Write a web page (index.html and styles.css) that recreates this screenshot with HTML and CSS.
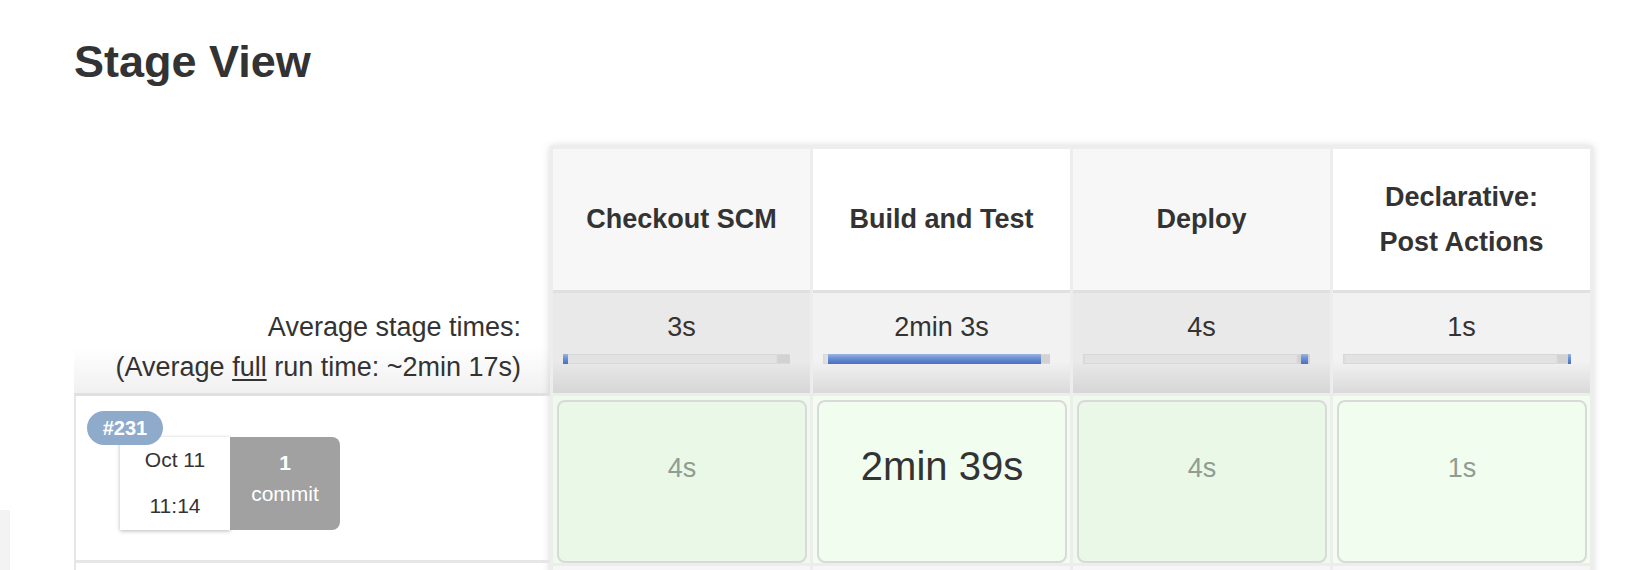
FILE: index.html
```html
<!DOCTYPE html>
<html lang="en">
<head>
<meta charset="utf-8">
<title>Stage View</title>
<link rel="stylesheet" href="styles.css">
</head>
<body>
<div class="page">
  <h1 class="title">Stage View</h1>
  <div class="stage-view">
    <div class="labels">
      <div class="labels-head"></div>
      <div class="labels-avg">
        <div>Average stage times:</div>
        <div>(Average <u>full</u> run time: ~2min 17s)</div>
      </div>
      <div class="build-row">
        <span class="badge">#231</span>
        <div class="build-info">
          <div class="date"><div>Oct 11</div><div>11:14</div></div>
          <div class="commits"><div class="num">1</div><div>commit</div></div>
        </div>
      </div>
      <div class="build-row-next"></div>
    </div>
    <div class="stages">
      <div class="stage-head">Checkout SCM</div>
      <div class="stage-head alt">Build and Test</div>
      <div class="stage-head">Deploy</div>
      <div class="stage-head alt">Declarative:<br>Post Actions</div>

      <div class="stage-avg">3s<div class="bar"><div class="fill" style="margin-left:0px;width:5px"></div></div></div>
      <div class="stage-avg alt">2min 3s<div class="bar"><div class="fill" style="margin-left:5px;width:213px"></div></div></div>
      <div class="stage-avg">4s<div class="bar"><div class="fill" style="margin-left:218px;width:7px"></div></div></div>
      <div class="stage-avg alt">1s<div class="bar"><div class="fill" style="margin-left:225px;width:3px"></div></div></div>

      <div class="stage-cell"><div class="box">4s</div></div>
      <div class="stage-cell alt"><div class="box big">2min 39s</div></div>
      <div class="stage-cell"><div class="box">4s</div></div>
      <div class="stage-cell alt"><div class="box">1s</div></div>

      <div class="stage-next"></div>
      <div class="stage-next"></div>
      <div class="stage-next"></div>
      <div class="stage-next"></div>
    </div>
  </div>
</div>
<div class="side-stub"></div>
</body>
</html>
```
FILE: styles.css
```css
html, body {
  margin: 0;
  height: 570px;
  overflow: hidden;
  background: #fff;
}
body {
  font-family: "Liberation Sans", Arial, Helvetica, sans-serif;
  color: #333;
  position: relative;
}
.page {
  padding-left: 74px;
}
.title {
  margin: 36px 0 0;
  font-size: 45px;
  line-height: 52px;
  font-weight: bold;
  color: #333;
}
.stage-view {
  display: flex;
  align-items: flex-start;
  margin-top: 58px;
}
.labels {
  width: 476px;
  flex: none;
}
.labels-head {
  height: 145px;
}
.labels-avg {
  height: 102px;
  box-sizing: border-box;
  padding: 16px 29px 0 0;
  text-align: right;
  font-size: 27px;
  line-height: 40px;
  background: linear-gradient(to bottom, #fff 55%, #f0f0f0);
}
.labels-avg u {
  text-underline-offset: 3px;
}
.build-row {
  position: relative;
  box-sizing: border-box;
  height: 170px;
  border-top: 3px solid #e0e0e0;
  border-left: 2px solid #e6e6e6;
  border-bottom: 3px solid #e6e6e6;
  padding: 41px 0 0 44px;
}
.build-row-next {
  height: 40px;
  border-left: 2px solid #e6e6e6;
}
.badge {
  position: absolute;
  left: 11px;
  top: 15px;
  width: 76px;
  height: 34px;
  border-radius: 17px;
  background: #8fabcc;
  color: #fff;
  font-size: 20px;
  font-weight: bold;
  line-height: 34px;
  text-align: center;
}
.build-info {
  display: flex;
}
.date {
  width: 110px;
  height: 93px;
  box-sizing: border-box;
  padding-top: 0;
  background: #fff;
  box-shadow: 0 1px 4px rgba(0, 0, 0, 0.28);
  font-size: 21px;
  line-height: 45.5px;
  text-align: center;
}
.commits {
  width: 110px;
  height: 93px;
  box-sizing: border-box;
  padding-top: 10px;
  background: #a1a1a1;
  color: #fff;
  border-radius: 0 8px 8px 0;
  font-size: 21px;
  line-height: 31px;
  text-align: center;
}
.commits .num {
  font-weight: bold;
}
.stages {
  flex: none;
  display: grid;
  grid-template-columns: repeat(4, 257px);
  column-gap: 3px;
  padding: 3px;
  background: #ededed;
  box-shadow: 0 0 8px rgba(0, 0, 0, 0.16);
}
.stage-head {
  height: 141px;
  display: flex;
  align-items: center;
  justify-content: center;
  text-align: center;
  font-size: 27px;
  font-weight: bold;
  line-height: 45px;
  background: #f7f7f7;
}
.stage-head.alt {
  background: #fff;
}
.stage-avg {
  box-sizing: border-box;
  height: 103px;
  border-top: 3px solid #e0e0e0;
  padding-top: 14px;
  text-align: center;
  font-size: 27px;
  line-height: 40px;
  background: linear-gradient(to bottom, #e9e9e9 0, #e9e9e9 68%, #d6d6d6 100%);
}
.stage-avg.alt {
  background: linear-gradient(to bottom, #f2f2f2 0, #f2f2f2 68%, #dadada 100%);
}
.bar {
  display: flex;
  margin: 7px 0 0 10px;
  width: 227px;
  height: 10px;
  background: linear-gradient(to right, #d6d6d6 0, #e2e2e2 3px, #e2e2e2 213px, #d2d2d2 215px, #d2d2d2 100%);
  box-shadow: inset 0 1px 0 #d8d8d8, inset 0 -1px 0 #d8d8d8;
}
.fill {
  height: 100%;
  flex: none;
  background: linear-gradient(to bottom, #9db5e0 0, #6a8fd2 45%, #4a6fc2 100%);
}
.stage-cell {
  margin-top: 3px;
  padding: 4px 3px 0 4px;
  background: #eefaec;
}
.stage-cell.alt {
  background: #f2fdf0;
}
.box {
  box-sizing: border-box;
  height: 163px;
  border: 2px solid #d9d9d9;
  border-radius: 8px;
  background: #e9f8e7;
  padding-top: 46px;
  text-align: center;
  font-size: 27px;
  line-height: 40px;
  color: #929c92;
}
.stage-cell.alt .box {
  background: #f0fdef;
}
.box.big {
  font-size: 40px;
  padding-top: 44px;
  color: #333;
}
.stage-next {
  height: 40px;
  margin-top: 3px;
  background: #f6f6f6;
}
.side-stub {
  position: absolute;
  left: 0;
  top: 510px;
  width: 10px;
  height: 60px;
  background: #f3f3f3;
}
```
